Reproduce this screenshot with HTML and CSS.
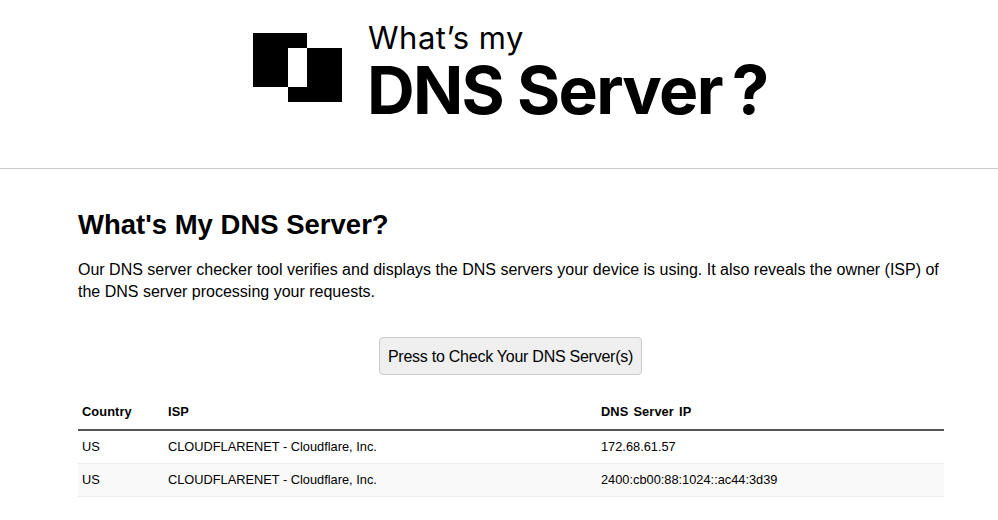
FILE: index.html
```html
<!DOCTYPE html>
<html lang="en">
<head>
<meta charset="utf-8">
<title>What's My DNS Server?</title>
<link rel="stylesheet" href="styles.css">
</head>
<body>
<header class="site-header">
  <a class="logo" href="#">
    <svg class="logo-mark" viewBox="0 0 89 69" width="89" height="69" aria-hidden="true">
      <path d="M0 0H54V15H35V54H0Z"/>
      <path d="M54 15H89V69H35V54H54Z"/>
    </svg>
    <span class="logo-text">
      <span class="logo-small">What’s my</span>
      <span class="logo-big">DNS Server<span class="logo-q">?</span></span>
    </span>
  </a>
</header>
<main class="content">
  <h1 class="title">What's My DNS Server?</h1>
  <p class="intro">Our DNS server checker tool verifies and displays the DNS servers your device is using. It also reveals the owner (ISP) of the DNS server processing your requests.</p>
  <div class="action"><button class="check-btn" type="button">Press to Check Your DNS Server(s)</button></div>
  <table class="results">
    <thead>
      <tr><th class="col-country">Country</th><th class="col-isp">ISP</th><th>DNS Server IP</th></tr>
    </thead>
    <tbody>
      <tr><td>US</td><td>CLOUDFLARENET - Cloudflare, Inc.</td><td>172.68.61.57</td></tr>
      <tr class="alt"><td>US</td><td>CLOUDFLARENET - Cloudflare, Inc.</td><td>2400:cb00:88:1024::ac44:3d39</td></tr>
    </tbody>
  </table>
</main>
</body>
</html>
```
FILE: styles.css
```css
* { box-sizing: border-box; }
html, body { margin: 0; padding: 0; background: #fff; color: #000; }
body { font-family: "Liberation Sans", Arial, sans-serif; overflow: hidden; }
.site-header { height: 169px; border-bottom: 1px solid #ccc; display: flex; justify-content: flex-start; padding: 18px 0 0 253px; }
.logo { display: flex; color: #000; text-decoration: none; height: 100px; }
.logo-mark { margin-top: 15px; margin-right: 25px; flex: none; }
.logo-text { display: flex; flex-direction: column; font-family: Inter, sans-serif; }
.logo-small { font-size: 31px; line-height: 39px; letter-spacing: 0.5px; font-weight: 400; margin-left: 1px; }
.logo-big { font-size: 66px; line-height: 67px; font-weight: 700; letter-spacing: -1.7px; white-space: nowrap; }
.logo-q { margin-left: 10px; font-size: 67px; line-height: 60px; }
.content { padding: 0 54px 0 78px; }
.title { font-size: 27.5px; line-height: 32px; font-weight: 700; margin: 40px 0 0; }
.intro { font-size: 16px; line-height: 22px; margin: 18px 0 0; }
.action { display: flex; justify-content: center; margin-top: 34px; margin-right: 1px; }
.check-btn { font-family: "Liberation Sans", Arial, sans-serif; font-size: 16px; letter-spacing: -0.25px; height: 38px; padding: 1px 0 0; width: 263px; white-space: nowrap; background: #efefef; border: 1px solid #ccc; border-radius: 4px; color: #000; }
.results { width: 866px; border-collapse: collapse; margin-top: 18px; font-size: 12.8px; table-layout: fixed; }
.results th { text-align: left; font-weight: 700; padding: 0 4px; height: 37px; border-bottom: 2px solid #555; letter-spacing: 0.1px; word-spacing: 1.5px; }
.results td { padding: 0 4px; height: 33px; border-bottom: 1px solid #eee; }
.col-country { width: 86px; }
.col-isp { width: 433px; }
.alt td { background: #f9f9f9; }
```
